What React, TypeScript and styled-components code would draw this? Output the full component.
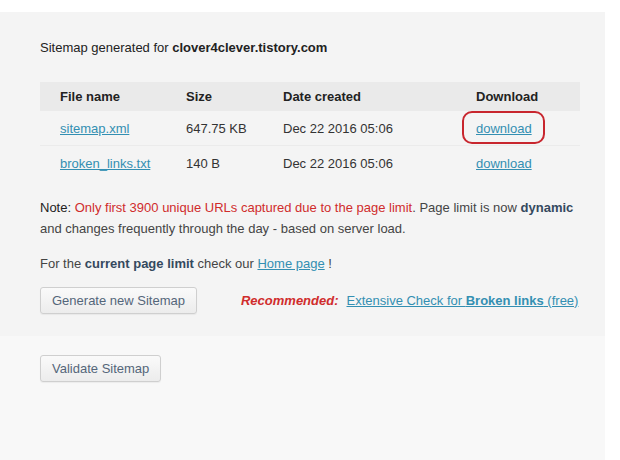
import React from "react";
import styled, { createGlobalStyle } from "styled-components";

const Global = createGlobalStyle`
  html, body { margin: 0; padding: 0; background: #ffffff; overflow: hidden; }
  body { font-family: "Liberation Sans", Arial, sans-serif; font-size: 13px; color: #333; }
`;

const Page = styled.div`
  width: 605px;
  height: 448px;
  margin-top: 12px;
  display: flex;
  flex-direction: column;
`;

const Upper = styled.div`
  background: #f4f4f4;
  padding: 28px 25px 22px 40px;
`;

const Lower = styled.div`
  flex: 1;
  background: #f8f8f8;
  padding: 19px 40px 0 40px;
`;

const Title = styled.div`
  color: #222;
  line-height: 16px;
  margin-bottom: 26px;
`;

const Strong = styled.b<{ $c?: string }>`
  font-weight: bold;
  color: ${(p) => p.$c || "inherit"};
`;

const Table = styled.div`
  display: flex;
  flex-direction: column;
`;

const Row = styled.div<{ $head?: boolean; $line?: boolean }>`
  display: grid;
  grid-template-columns: 126px 97px 193px 1fr;
  align-items: center;
  height: ${(p) => (p.$head ? "29px" : "35px")};
  padding-left: 20px;
  box-sizing: border-box;
  background: ${(p) => (p.$head ? "#eaeaea" : "transparent")};
  border-bottom: ${(p) => (p.$line ? "1px solid #ebebeb" : "none")};
  font-weight: ${(p) => (p.$head ? "bold" : "normal")};
  color: ${(p) => (p.$head ? "#222" : "#333")};
`;

const Cell = styled.div`
  position: relative;
`;

const Link = styled.a`
  color: #338fb2;
  text-decoration: underline;
  cursor: pointer;
`;

const Circle = styled.span`
  position: absolute;
  left: -14px;
  top: -10px;
  width: 83px;
  height: 33px;
  border: 2px solid #c8262e;
  border-radius: 10px;
  box-sizing: border-box;
`;

const Para = styled.p<{ $top: number }>`
  margin: ${(p) => p.$top}px 0 0 0;
  line-height: 21px;
  color: #444;
`;

const Dark = styled.span`
  color: #222;
`;

const Red = styled.span`
  color: #d02c2c;
`;

const Actions = styled.div`
  display: flex;
  align-items: center;
  gap: 44px;
  margin-top: 13px;
`;

const Button = styled.button`
  font-family: "Liberation Sans", Arial, sans-serif;
  font-size: 13px;
  color: #54667a;
  height: 27px;
  padding: 0 11px;
  white-space: nowrap;
  border: 1px solid #cfcfcf;
  border-radius: 3px;
  background: linear-gradient(#fafafa, #ececec);
  box-shadow: 0 1px 1px rgba(0, 0, 0, 0.05);
`;

const Recommend = styled.div`
  color: #444;
  white-space: nowrap;
`;

const RedBold = styled.span`
  color: #d02c2c;
  font-weight: bold;
  font-style: italic;
  margin-right: 8px;
`;

export default function App() {
  return (
    <>
      <Global />
      <Page>
        <Upper>
          <Title>
            Sitemap generated for <Strong>clover4clever.tistory.com</Strong>
          </Title>
          <Table>
            <Row $head>
              <div>File name</div>
              <div>Size</div>
              <div>Date created</div>
              <div>Download</div>
            </Row>
            <Row $line>
              <div><Link>sitemap.xml</Link></div>
              <div>647.75 KB</div>
              <div>Dec 22 2016 05:06</div>
              <Cell>
                <Circle />
                <Link>download</Link>
              </Cell>
            </Row>
            <Row>
              <div><Link>broken_links.txt</Link></div>
              <div>140 B</div>
              <div>Dec 22 2016 05:06</div>
              <Cell><Link>download</Link></Cell>
            </Row>
          </Table>
          <Para $top={16}>
            <Dark>Note:</Dark>{" "}
            <Red>Only first 3900 unique URLs captured due to the page limit</Red>. Page limit is now{" "}
            <Strong $c="#34495e">dynamic</Strong> and changes frequently through the day - based on server load.
          </Para>
          <Para $top={14}>
            For the <Strong $c="#34495e">current page limit</Strong> check our <Link>Home page</Link> !
          </Para>
          <Actions>
            <Button>Generate new Sitemap</Button>
            <Recommend>
              <RedBold>Recommended:</RedBold>
              <Link>
                Extensive Check for <Strong>Broken links</Strong> (free)
              </Link>
            </Recommend>
          </Actions>
        </Upper>
        <Lower>
          <Button>Validate Sitemap</Button>
        </Lower>
      </Page>
    </>
  );
}
